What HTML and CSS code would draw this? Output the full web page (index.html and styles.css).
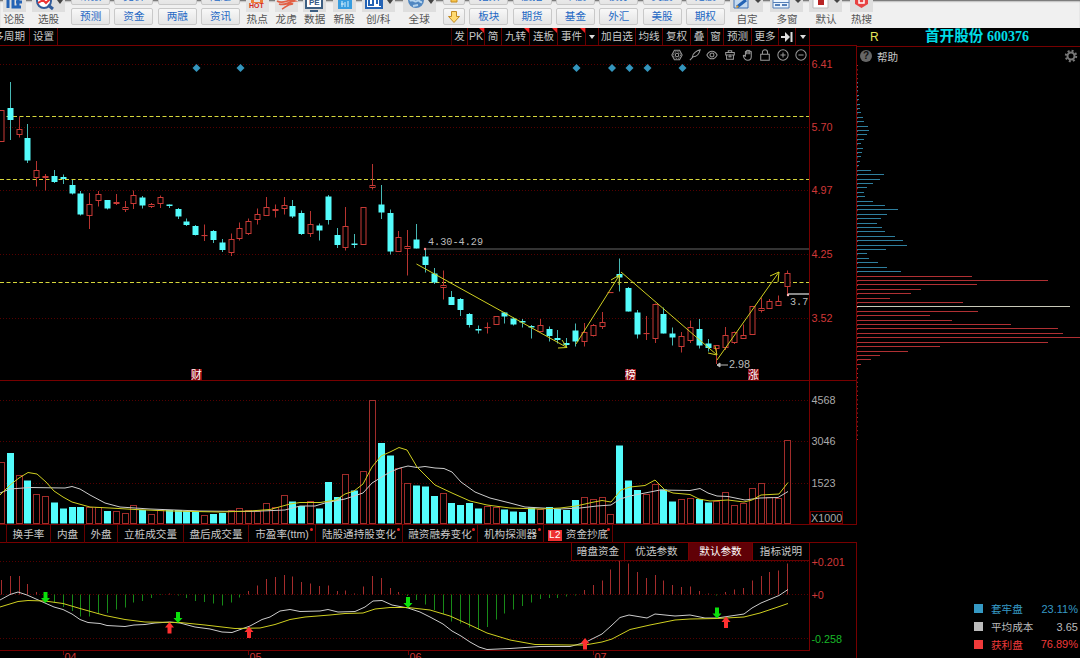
FILE: index.html
```html
<!DOCTYPE html>
<html lang="zh-CN">
<head>
    <meta charset="UTF-8">
    <meta name="viewport" content="width=device-width, initial-scale=1.0">
    <title>首开股份 600376</title>
    <link rel="stylesheet" href="styles.css">
</head>
<body>
    <header class="toolbar">
        <div class="tool w28"><span class="icon"><svg width="23" height="12"><rect width="23" height="12" fill="#dedede"/><path d="M5 0v8M10 0v7h8M13 2h6M15 0v7" stroke="#2463b5" stroke-width="3" fill="none"/></svg></span>论股</div>
        <div class="tool w41"><span class="icon"><svg width="33" height="12"><rect width="33" height="12" fill="#dedede"/><circle cx="12" cy="1" r="7" fill="#fff" stroke="#315c9b" stroke-width="2"/><path d="M6 3l5-3 3 3 4-4" stroke="#e33" stroke-width="2" fill="none"/><path d="M16 5l5 4" stroke="#315c9b" stroke-width="3"/><path d="M25 0h6l-3 4z" fill="#444"/></svg></span>选股</div>
        <div class="pair"><button>研报</button><button>预测</button></div>
        <div class="pair"><button>竞价</button><button>资金</button></div>
        <div class="pair"><button>DDE</button><button>两融</button></div>
        <div class="pair"><button>陆通</button><button>资讯</button></div>
        <div class="tool w30"><span class="icon"><svg width="23" height="12"><rect width="23" height="12" fill="#e2e2e2"/><path d="M5 0h3v2h6V0h3v3H5z" fill="#ef7b38"/><text x="3" y="8" class="hot">HOT</text></svg></span>热点</div>
        <div class="tool w28"><span class="icon"><svg width="23" height="12"><rect width="23" height="12" fill="#e2e2e2"/><path d="M2 1c7 4 11-3 18 0-7 1-11 5-16 3 5 2 10-2 14 0-6 0-8 4-11 5" stroke="#e26045" stroke-width="1.7" fill="none"/></svg></span>龙虎</div>
        <div class="tool w29"><span class="icon"><svg width="23" height="12"><rect width="23" height="12" fill="#dedede"/><path d="M3 0v8h16V0M7 11h8" stroke="#3d5f83" stroke-width="2" fill="#fff"/><text x="6" y="5" class="pe">PE</text></svg></span>数据</div>
        <div class="tool w30"><span class="icon"><svg width="23" height="12"><rect width="23" height="12" fill="#dedede"/><rect x="5" width="14" height="9" fill="#379de0"/><path d="M9 1v6M12 2v5M15 1v6M8 4h3" stroke="#d9f2ff" fill="none"/></svg></span>新股</div>
        <div class="tool w38"><span class="icon"><svg width="33" height="12"><rect width="33" height="12" fill="#dedede"/><path d="M4 0v8h16V0" stroke="#2463b5" stroke-width="2" fill="#fff"/><path d="M7 0v5h5M11 0v5M15 0v4M18 0v6" stroke="#2463b5" stroke-width="2" fill="none"/><path d="M25 0h6l-3 4z" fill="#444"/></svg></span>创/科</div>
        <div class="tool w44"><span class="icon"><svg width="33" height="12"><rect width="33" height="12" fill="#dedede"/><circle cx="13" cy="0" r="8" fill="#5187c1"/><path d="M7 1c3-3 4 2 7 0s2 2 5 1M10 6l5-1" stroke="#b5d4ee" stroke-width="2" fill="none"/><path d="M25 0h6l-3 4z" fill="#444"/></svg></span>全球</div>
        <div class="pair arrows"><button><svg width="14" height="14"><path d="M4 7h6v5H4z" fill="#f7c54c" stroke="#c78b1c"/></svg></button><button><svg width="14" height="14"><path d="M4.500 1.500h5v5h3L7 12.500 1.500 6.500h3z" fill="#ffda70" stroke="#c18a22"/></svg></button></div>
        <div class="pair"><button>指数</button><button>板块</button></div>
        <div class="pair"><button>股指</button><button>期货</button></div>
        <div class="pair"><button>个股</button><button>基金</button></div>
        <div class="pair"><button>债券</button><button>外汇</button></div>
        <div class="pair"><button>英股</button><button>美股</button></div>
        <div class="pair"><button>港股</button><button>期权</button></div>
        <div class="tool w40"><span class="icon"><svg width="33" height="12"><rect width="33" height="12" fill="#dedede"/><path d="M4 0v8h14V0" fill="#c5daf0" stroke="#3f70b5"/><path d="M7 7l9-7" stroke="#2463b5" stroke-width="3"/><path d="M6 8l1-3 2 2z" fill="#e9a12b"/><path d="M25 0h6l-3 3z" fill="#444"/></svg></span>自定</div>
        <div class="tool w40"><span class="icon"><svg width="33" height="12"><rect width="33" height="12" fill="#dedede"/><path d="M3 0v8h16V0M3 2.500h16" fill="#eaf3fc" stroke="#5580b9"/><path d="M5 5h5M12 5h5" stroke="#5580b9" stroke-width="2"/><path d="M25 0h6l-3 3z" fill="#444"/></svg></span>多窗</div>
        <div class="tool w38"><span class="icon"><svg width="33" height="12"><rect width="33" height="12" fill="#dedede"/><path d="M4 0v8h15V0" fill="#fff" stroke="#bbb"/><rect x="9" width="6" height="5" fill="#b82424"/><path d="M25 0h6l-3 3z" fill="#444"/></svg></span>默认</div>
        <div class="tool w33"><span class="icon"><svg width="23" height="12"><rect width="23" height="12" fill="#dedede"/><path d="M5 0v4l6.500 4 6.500-4V0z" fill="#e84343"/><path d="M9 0v3h5V0" fill="none" stroke="#fff" stroke-width="1.500"/></svg></span>热搜</div>
    </header>

    <main class="workspace">
        <section class="charts">
            <nav class="period">
                <div class="period-left"><span class="clipped">多周期</span><span>设置</span></div>
                <span>发</span><span class="new">PK</span><span>简</span><span class="new">九转</span><span class="new">连板</span><span class="new">事件</span><span><i class="caret"></i></span>
                <span>加自选</span><span>均线</span><span>复权</span><span>叠</span><span>窗</span><span>预测</span><span>更多</span>
                <span><svg width="12" height="10"><path d="M0 5h5M10.500 0v10" stroke="#ddd" stroke-width="2"/><path d="M4 0l5 5-5 5z" fill="#ddd"/></svg></span><span><i class="caret"></i></span>
            </nav>
            <div class="pane">
                <svg id="price" width="857" height="335" viewBox="0 46 857 335"></svg>
                <div class="draw-tools">
                    <svg viewBox="0 0 14 14"><path d="M4 1.500h6L13 7l-3 5.500H4L1 7z"/><circle cx="7" cy="7" r="2"/><circle cx="7" cy="7" r="4" stroke-dasharray="1 1"/></svg>
                    <svg viewBox="0 0 14 14"><path d="M1 13l4-4M4 9c0-4 5-7 9-8-1 4-3 8-8 8z"/></svg>
                    <svg viewBox="0 0 14 14"><path d="M1 7c3-6 9-6 12 0-3 6-9 6-12 0z"/><circle cx="7" cy="7" r="2.300"/></svg>
                    <svg viewBox="0 0 14 14"><path d="M2 4h10v3H2zM3 7v5h8V7M5 4V2h4v2M5 9h4M7 6v4"/></svg>
                    <svg viewBox="0 0 14 14"><path d="M4 9V3q1-1 1.500 0v3V2q1-1 1.700 0v4V2q1-1 1.800 0v4V3q1-1 1.800 0v6q0 4-4 4T1.500 8Q2 6 4 9"/></svg>
                    <svg viewBox="0 0 14 14"><path d="M2 6h10v7H2zM4 6V4q0-3 3-3t3 3v2"/></svg>
                    <svg viewBox="0 0 14 14"><circle cx="7" cy="7" r="6"/><path d="M4 7h6M7 4v6"/></svg>
                    <svg viewBox="0 0 14 14"><circle cx="7" cy="7" r="6"/><path d="M4 7h6"/></svg>
                </div>
            </div>
            <svg id="volume" width="857" height="144" viewBox="0 381 857 144"></svg>
            <nav class="tabs">
                <span></span><span>换手率</span><span>内盘</span><span>外盘</span><span>立桩成交量</span><span>盘后成交量</span>
                <span class="dot">市盈率(ttm)</span><span class="dot">陆股通持股变化</span><span class="dot">融资融券变化</span><span class="dot">机构探测器</span><span class="dot"><b>L2</b>资金抄底</span>
            </nav>
            <div class="pane">
                <svg id="macd" width="857" height="115" viewBox="0 543 857 115"></svg>
                <div class="params"><span>暗盘资金</span><span>优选参数</span><span class="active">默认参数</span><span>指标说明</span></div>
            </div>
        </section>

        <aside class="chips">
            <div class="stock"><span class="flag">R</span><span class="name">首开股份 <b>600376</b></span></div>
            <div class="chips-body">
                <div class="help">
                    <i class="question">?</i><span>帮助</span>
                    <svg class="gear" width="14" height="14" viewBox="0 0 14 14"><circle cx="7" cy="7" r="3.500" fill="none" stroke="#777" stroke-width="2"/><circle cx="7" cy="7" r="5.200" fill="none" stroke="#777" stroke-width="2" stroke-dasharray="2 2.080"/></svg>
                </div>
                <svg id="chipChart" width="223" height="535" viewBox="857 65 223 535"></svg>
                <ul class="legend">
                    <li class="blue"><i></i>套牢盘<span>23.11%</span></li>
                    <li class="grey"><i></i>平均成本<span>3.65</span></li>
                    <li class="red"><i></i>获利盘<span>76.89%</span></li>
                </ul>
            </div>
        </aside>
    </main>
    <script src="chart.js"></script>
</body>
</html>
```

FILE: styles.css
```css
body {
    margin: 0;
    width: 1080px;
    height: 658px;
    overflow: hidden;
    background: #000;
    color: #c8c8c8;
    font-family: "Liberation Sans", "Noto Sans CJK SC", sans-serif;
    font-size: 10.6px;
}
.toolbar {
    display: flex;
    height: 28px;
    overflow: hidden;
    background: #f0f0f0;
    box-shadow: inset 0 2px 2px -1px #555;
}
.tool {
    display: flex;
    flex-direction: column;
    align-items: center;
    flex: none;
    color: #555;
    line-height: 15px;
    white-space: nowrap;
}
.icon {
    height: 12px;
}
.icon svg {
    display: block;
}
.w28 { width: 28px; }
.w29 { width: 29px; }
.w30 { width: 30px; }
.w33 { width: 33px; }
.w38 { width: 38px; }
.w40 { width: 40px; }
.w41 { width: 41px; }
.w44 { width: 44px; }
.hot {
    font: bold 7px "Liberation Sans", sans-serif;
    fill: #d82c24;
}
.pe {
    font: bold 8px "Liberation Sans", sans-serif;
    fill: #345985;
}
.pair {
    display: flex;
    flex-direction: column;
    justify-content: flex-end;
    align-items: center;
    gap: 3px;
    flex: none;
    width: 43.3px;
    height: 25px;
}
.pair button {
    flex: none;
    box-sizing: border-box;
    width: 39px;
    height: 17px;
    padding: 0;
    border: 1px solid #c9c9c9;
    border-radius: 2px;
    background: linear-gradient(#f8f8f8, #e4e4e4);
    color: #2468c4;
    font: 10.6px/15px "Liberation Sans", "Noto Sans CJK SC", sans-serif;
}
.arrows {
    width: 26px;
}
.arrows button {
    width: 22px;
}
.arrows svg {
    display: block;
    margin: auto;
}
.workspace {
    display: flex;
    height: 630px;
}
.charts {
    width: 857px;
    flex: none;
}
.charts > svg, .pane > svg {
    display: block;
}
.period {
    display: grid;
    grid-template-columns: 452px 16px 17px 17px 28px 28px 28px 13px 37px 27px 28px 17px 16px 28px 27px 17px 14px;
    box-sizing: border-box;
    height: 18px;
    border-bottom: 1px solid #700;
    line-height: 17px;
}
.period > span, .period-left span {
    position: relative;
    display: flex;
    align-items: center;
    justify-content: center;
    border-right: 1px solid #600;
    white-space: nowrap;
}
.period-left {
    display: flex;
    border-right: 1px solid #400;
}
.period-left span {
    width: 27px;
}
.period-left .clipped {
    width: 30px;
    justify-content: flex-end;
    padding-right: 4px;
    box-sizing: border-box;
}
.new::after {
    content: "";
    position: absolute;
    top: 0;
    right: 0;
    border-top: 5px solid #e22;
    border-left: 5px solid transparent;
}
.caret {
    border-top: 4px solid #ddd;
    border-left: 3px solid transparent;
    border-right: 3px solid transparent;
}
.pane {
    position: relative;
}
.draw-tools {
    position: absolute;
    top: 3px;
    left: 671px;
    display: flex;
    gap: 5.7px;
}
.draw-tools svg {
    width: 12px;
    height: 12px;
    fill: none;
    stroke: #999;
    stroke-width: 1.2;
}
.tabs {
    display: grid;
    grid-template-columns: 7px 44px 34px 33px 66px 65px 67px 87px 75px 66px 69px;
    box-sizing: border-box;
    height: 18px;
    border-bottom: 1px solid #700;
    line-height: 18px;
}
.tabs span {
    position: relative;
    border-right: 1px solid #600;
    text-align: center;
    white-space: nowrap;
}
.tabs b {
    margin-right: 4px;
    padding: 0 1px;
    background: #e33;
    color: #fff;
    font: 10px "Liberation Mono", monospace;
}
.dot::after {
    content: "";
    position: absolute;
    top: 3px;
    right: 2px;
    width: 3px;
    height: 3px;
    border-radius: 50%;
    background: #e22;
}
.params {
    position: absolute;
    top: 0;
    left: 571px;
    display: grid;
    grid-template-columns: 53px 64px 64px 57px;
    height: 17px;
    border-bottom: 1px solid #600;
    background: #000;
    line-height: 17px;
    text-align: center;
}
.params span {
    border-left: 1px solid #700;
}
.params .active {
    background: #600006;
    color: #fff;
}
.chips {
    display: flex;
    flex-direction: column;
    width: 223px;
}
.stock {
    display: flex;
    box-sizing: border-box;
    height: 19px;
    border-bottom: 1px solid #700;
    line-height: 18px;
}
.flag {
    width: 55px;
    padding-left: 13px;
    color: #e6e65a;
    font-size: 12px;
}
.name {
    color: #00dce6;
    font: bold 14.6px/17px "Liberation Serif", "Noto Sans CJK SC", serif;
    white-space: nowrap;
}
.name b {
    font-size: 14px;
}
.chips-body {
    flex: 1;
}
.help {
    display: flex;
    align-items: center;
    gap: 5px;
    height: 18px;
    padding: 0 2px 0 3px;
}
.question {
    width: 12px;
    height: 12px;
    border-radius: 50%;
    background: #666;
    color: #111;
    font: bold 10px/12px "Liberation Sans", sans-serif;
    text-align: center;
}
.gear {
    margin-left: auto;
}
#chipChart {
    display: block;
}
.legend {
    margin: 0;
    padding: 0 2px 0 117px;
    list-style: none;
}
.legend li {
    display: flex;
    align-items: center;
    height: 17.8px;
}
.legend i {
    width: 9px;
    height: 9px;
    margin-right: 8px;
    background: currentColor;
}
.legend span {
    margin-left: auto;
    font-size: 11px;
}
.blue { color: #3599c4; }
.grey { color: #bbb; }
.red { color: #f03a3a; }

/* chart drawing */
svg text {
    font-family: "Liberation Sans", "Noto Sans CJK SC", sans-serif;
    font-size: 10.8px;
}
svg text.hot { font-size: 7px; }
svg text.pe { font-size: 8px; }
svg .mono {
    font-family: "Liberation Mono", monospace;
    font-size: 10.2px;
}
.frame {
    stroke: #700;
    fill: none;
}
.grid-line {
    stroke: #500;
    stroke-dasharray: 1 2;
}
.level {
    stroke: #d6d63c;
    stroke-dasharray: 4 2.5;
}
.up {
    stroke: #c83a36;
    fill: #000;
}
.vol-up {
    stroke: #a02c2a;
    fill: #000;
}
.down {
    stroke: none;
    fill: #54fcfc;
}
.wick-up { stroke: #b83430; }
.wick-down { stroke: #48b8b4; }
.yellow-line {
    stroke: #cfcf20;
    fill: none;
}
.white-line {
    stroke: #ccc;
    fill: none;
}
```

FILE: chart.js
```js
const STEP = 8.833;
const cx = i => 1.4 + STEP * i;

// direction (1 up, 0 down), high, body top, body bottom, low
const candles = [
    [1,110,110.5,142,142],[0,82,108,120,140],[1,116.5,129,134.5,137.5],[0,124,138,160.5,163],[1,161,170,178,186.5],
    [1,174,176.5,177.5,190.5],[0,170,176,182,183],[0,174.5,177,179,184],[0,180,185,193.5,194.5],[0,191,193.5,214.5,215.5],
    [1,193,204,215.5,229],[1,191,194.5,200.5,206.5],[0,200,200,208.5,209.5],[1,194,202.5,203.5,205],[1,201,207,209.5,212],
    [1,190.5,195.5,204,209],[0,196,197.5,205.5,208.5],[1,203,204.5,206.5,208],[1,195.5,197.5,203.5,208],[0,204.5,204.5,206,208],
    [0,208,209,216.5,219],[0,218.5,221.5,225,226],[0,225,226,235,235.5],[1,224.5,235,236,241],[0,230,231,240,243],
    [0,239,242.5,250,252],[1,233.5,239,252.5,256],[1,222.5,228.5,238.5,240.5],[1,218.5,221.5,233.5,235],[1,208.5,214.5,219.5,224.5],
    [1,197,207.5,215.5,215.5],[1,204.5,209,210.5,217.5],[1,197,205.5,208.5,214.5],[0,200,206,216.5,218],[0,210.5,213,234,235],
    [1,211,224.5,233.5,237],[0,223.5,225.5,230.5,240.5],[0,195,196.5,220,224.5],[0,228,235,245,248],[1,207,226.5,247.5,250.5],
    [0,234,243.5,244.5,248],[1,207.5,207.5,244.5,244.5],[1,164,185,188,189.5],[0,185,204.5,212.5,219],[0,209.5,213,251.5,254.5],
    [1,231,237.5,251.5,251.5],[1,230,246.5,249,275.5],[0,224,239.5,248.5,248.5],[0,249,256.5,265,272.5],[0,268,273.5,282.5,284],
    [1,270.5,285,287.5,299.5],[0,291,297,305,305],[0,298,299,310,316],[0,313,314,325,327.5],[0,325.5,329,330,333.5],
    [1,322.5,327,328,333.5],[1,316.5,316.5,324.5,324.5],[0,312,312.5,316.5,323.5],[0,317.5,318.5,324.5,325.5],[0,319,321,322.5,327.5],
    [0,325,326,327,338.5],[1,319,325.5,331.5,331.5],[0,326.5,329,336,341.5],[0,330,338,340,343.5],[0,338,343,345,348],
    [0,323.5,330.5,341.5,346.5],[1,323,332.5,341.5,346.5],[1,324,325.5,335.5,336.5],[1,312,322.5,326.5,329],[1,292,292,293,293],
    [0,258.5,274,277.5,291.5],[0,287,288,311.5,311.5],[0,310,312.5,334.5,338.5],[1,316,333,334,340],[1,303.5,304.5,338.5,343],
    [0,307.5,314,333.5,333.5],[0,327.5,333.5,337.5,345.5],[1,332,336,346.5,352.5],[1,320.5,327.5,340.5,343],[0,319,329,345.5,348.5],
    [0,339,343.5,348,351.5],[1,345,345,348.5,364],[1,327,335.5,348,350],[1,331.5,332.5,342.5,344],[1,324.5,335.5,338.5,338.5],
    [1,306.5,306.5,334.5,334.5],[1,297.5,308.5,310.5,312.5],[1,299,301.5,308.5,309],[1,295.5,301.5,305.5,306],[1,270.5,273.5,286.5,294.5]
];

// y of the top of every volume bar
const volume = [
    462.5,453,475,480.5,494.5,496.5,502.5,508.5,507,507,507.5,507.5,511,511,513.5,505.5,510,514.5,510,510,
    510,511,511,515,514,513,510,508.5,510,511,503.5,507.5,495.5,501.5,506,501,508.5,482,497,474.5,
    490.5,471.5,400,443,455.5,468.5,483.5,485.5,486.5,496,493.5,503,505,503,508.5,506.5,507,509.5,511.5,512,
    507.5,509.5,507,509,510,500,497.5,499.5,497.5,514.5,445.5,480.5,490,494.5,484.5,489.5,501.5,499.5,498.5,499,
    502.5,501.5,492.5,505,503.5,488.5,483.5,497.5,498.5,440.5
];

// y of the end of every MACD bar
const macd = [
    580,576,576,584,592,600,602.5,607,611,616.5,616.5,614,613,609.5,607.5,602.5,601,598,595,593.5,
    595.5,598,601,602,603.5,605.5,602.5,597.5,591,585.5,579,577,575,576.5,582,583.5,586,585.5,591,590.5,
    593.5,586.5,576,578,588,592,596,600,604.5,610,614,621.5,623.5,627.5,629.5,627,619.5,613.5,609.5,606,
    602.5,599,598,598,596.5,595.5,590,585,580.5,569.5,560.5,563.5,572,578,575,580.5,585,587,586.5,591,
    593.5,595.5,592,589.5,588,580.5,576,572,570.5,563.5
];

const chipLengths = [
    1,1,1,2,2,3,3,4,6,7,11,12,10,7,4,6,5,4,3,2,14,27,23,16,10,7,8,16,28,41,30,24,20,25,28,38,46,50,29,10,12,21,30,44,
    115,191,120,64,54,33,106,213,121,73,95,154,201,206,223,191,83,51,23,14,4,1,1,1
];

const line = (x1, y1, x2, y2, cls) => `<line x1="${x1}" y1="${y1}" x2="${x2}" y2="${y2}" class="${cls}"/>`;
const text = (x, y, fill, value, cls = "") => `<text x="${x}" y="${y}" fill="${fill}" class="${cls}">${value}</text>`;
const poly = (points, cls) => `<polyline points="${points}" class="${cls}"/>`;
const snap = v => Math.floor(v) + 0.5;

function renderPrice() {
    let out = "";
    [64.5, 127.5, 190.5, 254.5, 318.5].forEach((y, i) => {
        out += line(0, y, 809, y, "grid-line");
        out += text(811.5, y + 3.5, "#d03838", ["6.41", "5.70", "4.97", "4.25", "3.52"][i]);
    });
    [116.5, 179.5, 282.5].forEach(y => out += line(0, y, 809, y, "level"));
    out += '<path d="M425 249H809" stroke="#666"/><path d="M788 294H809" stroke="#888" stroke-width="2"/>';
    candles.forEach(([up, high, top, bottom, low], i) => {
        const x = snap(cx(i));
        out += line(x, high, x, low, up ? "wick-up" : "wick-down");
        if (up) {
            const t = snap(top);
            out += `<rect x="${x - 2.5}" y="${t}" width="5" height="${Math.max(0.1, snap(bottom - 0.5) - t)}" class="up"/>`;
        } else {
            out += `<rect x="${x - 3}" y="${top}" width="6" height="${Math.max(1.5, bottom - top)}" class="down"/>`;
        }
    });
    out += poly("416.5,264 567,347.5", "yellow-line") + poly("558,348 567,347.5 562,340", "yellow-line");
    out += poly("576,344 619.5,275", "yellow-line") + poly("611,280 619.5,275 619,285", "yellow-line");
    out += poly("621,272 717,355", "yellow-line") + poly("708,353 717,355 715,346", "yellow-line");
    out += poly("717,360 779,272", "yellow-line") + poly("770,276 779,272 778,282", "yellow-line");
    [196.5, 240.5, 576.5, 612, 629.5, 647.5, 682.5].forEach(x => {
        out += `<path d="M${x} 64l4 4-4 4-4-4z" fill="#3495bd"/>`;
    });
    out += text(428, 245, "#bbb", "4.30-4.29", "mono") + text(729, 368, "#bbb", "2.98");
    out += '<svg x="788" y="290" width="21" height="20"><text x="2" y="15" fill="#bbb" class="mono">3.7</text></svg>';
    out += '<path d="M717 365h11M717 365l3-2v4z" stroke="#bbb" fill="#bbb"/>';
    out += '<circle cx="425" cy="249" r="1.2" fill="#f88"/><circle cx="788" cy="295" r="1.2" fill="#fbb"/>';
    [[196, "财"], [630, "榜"], [753, "涨"]].forEach(([x, label]) => {
        out += `<rect x="${x - 5}" y="369" width="11" height="11" fill="#8c0a12"/>` + text(x - 5, 378.5, "#fff", label);
    });
    out += line(0, 380.5, 857, 380.5, "frame") + line(809.5, 46, 809.5, 381, "frame") + line(856.5, 46, 856.5, 381, "frame");
    document.getElementById("price").innerHTML = out;
}

function renderVolume() {
    let out = "";
    [400.5, 441.5, 483.5].forEach((y, i) => {
        out += line(0, y, 809, y, "grid-line") + text(811.5, y + 3.5, "#aaa", ["4568", "3046", "1523"][i]);
    });
    volume.forEach((top, i) => {
        const x = snap(cx(i));
        if (candles[i][0]) {
            out += `<rect x="${x - 3}" y="${snap(top)}" width="6" height="${523.5 - snap(top)}" class="vol-up"/>`;
        } else {
            out += `<rect x="${x - 3.5}" y="${top}" width="7" height="${523.5 - top}" class="down"/>`;
        }
    });
    out += poly("0,493 10,489 30,487.5 65,488 72,486.5 80,489 90,495 105,503 120,507 150,509 200,511 250,511.5 285,510 300,506 315,506 325,503 345,499 363,493 372,483 390,472 400,468 408,466 417,467.5 425,466.5 435,468 444,468.5 452,472 461,482 475,492 490,498 510,503 525,507 560,509 580,508 597,506 611,505 620,499 630,496 645,493 660,490 690,490.5 700,488.5 708,493 717,496 728,496.5 745,500 760,498 778,497.5 788,491.5", "white-line");
    out += poly("0,495 10,485 19,478 28,472.5 37,474 46,482 54,491 63,497 72,502 90,507 110,508 135,509.5 170,511 220,512 250,511 270,509.5 290,504 300,502.5 320,502.5 336,500 345,494 354,491 363,484 372,467 381,456 390,452 399,447.5 407,450 417,467 425,475 435,485 452,493 470,501 487,505 510,508 540,509 560,508 576,506 594,502 602,500.5 611,502 621,490 630,487 645,485.5 655,480 665,490 673,493 690,494.5 699,499 710,501 728,500 744,502 752,500 761,495 779,494 788,482.5", "yellow-line");
    out += '<rect x="810.5" y="511.5" width="32" height="12" class="frame"/>' + text(811, 522, "#aaa", "X1000");
    out += line(0, 524.5, 857, 524.5, "frame") + line(809.5, 381, 809.5, 525, "frame") + line(856.5, 381, 856.5, 525, "frame");
    document.getElementById("volume").innerHTML = out;
}

function renderMacd() {
    let out = "";
    [[561.5, "+0.201", "#d03838"], [594.5, "+0", "#d03838"], [638.5, "-0.258", "#18b828"]].forEach(([y, label, color]) => {
        out += line(0, y, 809, y, "grid-line") + text(811.5, y + 4, color, label);
    });
    macd.forEach((y, i) => {
        const x = snap(cx(i));
        out += `<path d="M${x} 594.5V${y}" stroke="${y < 594.5 ? "#a52c2c" : "#188a18"}"/>`;
    });
    out += poly("0,600 10,594.5 18,592 27,595 45,603 54,607 63,609.5 72,614 80,619.5 88,622.5 100,623.5 107,625.5 125,626.5 134,625 145,624.5 155,623 170,622 180,623 195,627 210,629 222,632 232,632.5 243,628.5 250,626 262,619.5 270,617 280,611 290,609.5 300,611.5 320,611 328,609.5 338,612 355,611.5 365,607 373,601 382,600.5 392,605 408,608 420,612 430,617 443,624 452,631 461,636 470,642 479,647 487,649.5 510,648.5 540,646.5 570,646.5 585,642.5 602,634 611,626 620,617.5 629,615 647,618 655,614 675,616 690,615 705,618 717,618 744,614 752,608 761,603 779,595.5 788,589.5", "white-line");
    out += poly("0,607 18,601.5 28,600.5 45,601 63,603.5 80,608.5 105,615.5 125,619.5 145,622 180,622.5 205,625 235,628.5 260,628 275,624.5 290,619.5 305,617 330,615 345,613.5 363,613 375,609 390,607.5 408,607.5 430,610 450,616 470,625 487,633 510,640 535,644.5 570,645 585,645 602,642 612,639 630,629.5 650,625 675,620 690,619 717,618.5 744,617 760,613 775,608 788,603.5", "yellow-line");
    [[45.5, 603], [178, 623], [408, 608], [717, 618.5]].forEach(([x, y]) => {
        out += `<path d="M${x} ${y}l-4.500-5h2.500v-6h4v6h2.500z" fill="#0be00b"/>`;
    });
    [[169.5, 622], [249, 626.5], [585, 638], [726, 616.5]].forEach(([x, y]) => {
        out += `<path d="M${x} ${y}l-4.500 5.500h2.500v6h4v-6h2.500z" fill="#ff3030"/>`;
    });
    out += line(0, 650.5, 810, 650.5, "frame") + line(809.5, 543, 809.5, 651, "frame") + line(856.5, 543, 856.5, 658, "frame");
    [[63.5, "04"], [248.5, "05"], [408.5, "06"], [593.5, "07"]].forEach(([x, label]) => {
        out += line(x, 651, x, 655, "frame") + text(x + 1, 661, "#d03838", label);
    });
    document.getElementById("macd").innerHTML = out;
}

function renderChips() {
    let out = '<path d="M857.5 65V440" stroke="#a03030" stroke-dasharray="1 3.400"/>';
    chipLengths.forEach((length, i) => {
        const y = snap(82 + i * 4.41);
        const color = i === 51 ? "#c8c8b8" : i < 44 ? "#2f7f9e" : "#b03033";
        out += `<path d="M857 ${y}h${length}" stroke="${color}"/>`;
    });
    document.getElementById("chipChart").innerHTML = out;
}

renderPrice();
renderVolume();
renderMacd();
renderChips();
```
